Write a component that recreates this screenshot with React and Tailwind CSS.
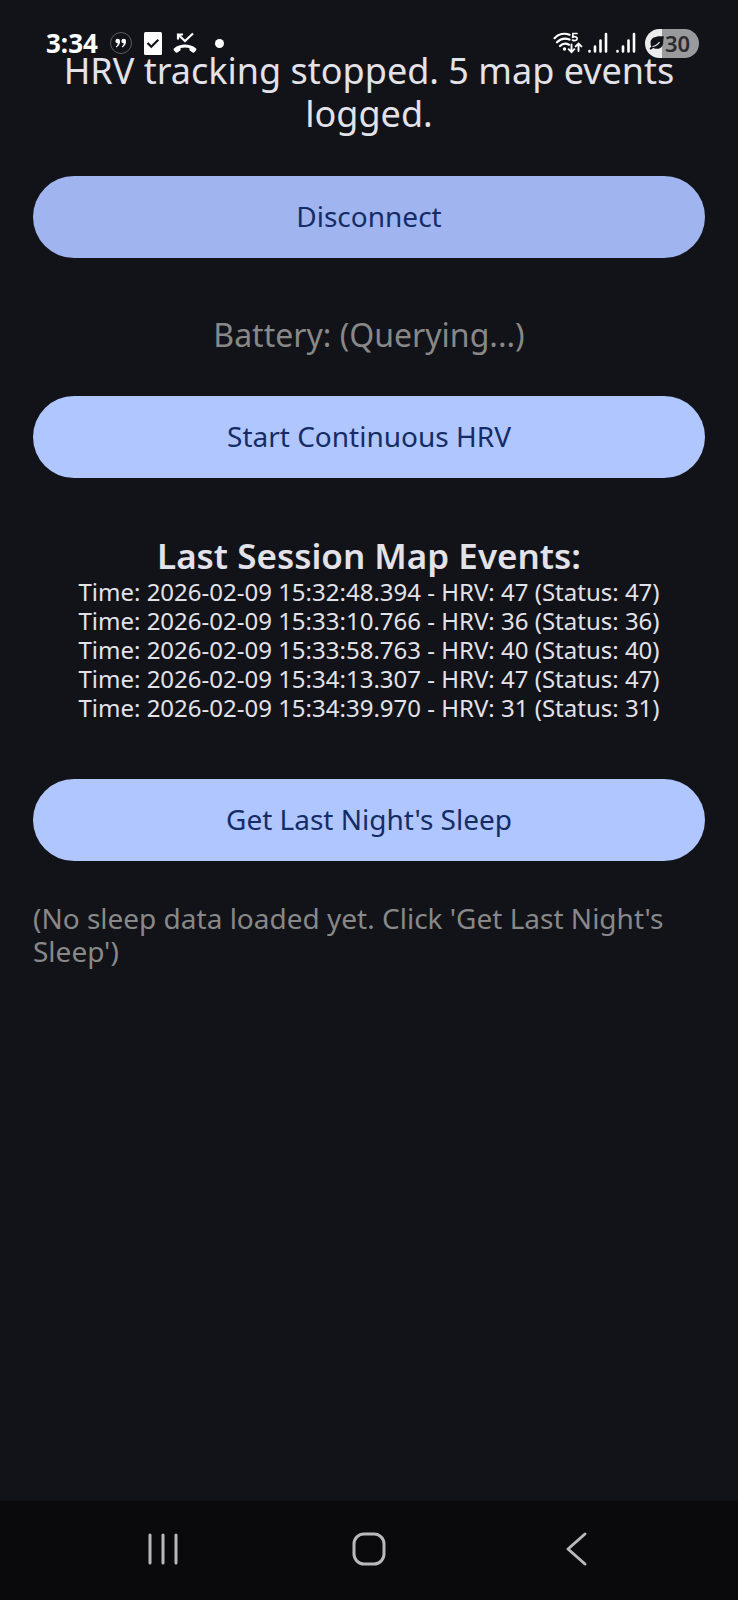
const events = [
  { time: "2026-02-09 15:32:48.394", hrv: 47, status: 47 },
  { time: "2026-02-09 15:33:10.766", hrv: 36, status: 36 },
  { time: "2026-02-09 15:33:58.763", hrv: 40, status: 40 },
  { time: "2026-02-09 15:34:13.307", hrv: 47, status: 47 },
  { time: "2026-02-09 15:34:39.970", hrv: 31, status: 31 },
];

function SignalIcon() {
  return (
    <svg width="20" height="22" viewBox="0 0 20 22" stroke="#fff" strokeWidth="2.6" strokeLinecap="round">
      <path d="M1.5 19v.5M7 14.5v5M12.5 8.5v11M18 2v17.5" />
    </svg>
  );
}

function WifiIcon() {
  return (
    <svg width="30" height="22" viewBox="0 0 30 22" fill="none" stroke="#fff" strokeWidth="2.2" strokeLinecap="round">
      <path d="M1.5 6.2C5.500 2 11.500 .8 16.500 2.800" />
      <path d="M4 10.300C7.500 6.700 12 5.800 16.500 7.500" />
      <path d="M7 14c2.500-2.600 5.800-3 9-1.300" />
      <circle cx="11.500" cy="17" r="1.700" fill="#fff" stroke="none" />
      <path d="M24 1.500h-4l-.3 3.600c2.800-1 4.600.1 4.400 1.800-.3 1.800-2.500 2.100-4.600 1.200" strokeWidth="1.700" />
      <path d="M18.500 12.500v7M15.600 17.200l2.900 2.900 2.900-2.900" strokeWidth="1.900" />
      <path d="M25.500 19v-7M22.600 14.400l2.900-2.900 2.900 2.900" strokeWidth="1.900" />
    </svg>
  );
}

function StatusBar() {
  return (
    <div className="absolute inset-x-0 top-0 z-10 flex h-[86px] items-center justify-between pl-[46px] pr-[39px]">
      <div className="flex items-center">
        <span className="text-[26px] font-bold leading-none text-white">3:34</span>
        <svg className="ml-[11px]" width="24" height="24" viewBox="0 0 24 24">
          <circle cx="12" cy="12" r="10.500" fill="none" stroke="#5b5c60" strokeWidth="1" />
          <g fill="#fff">
            <circle cx="8.700" cy="10" r="2.300" />
            <path d="M11 10c.2 3-1.200 5.200-3.600 6.400l-.6-1c1.300-.9 2-2 2-3.400z" />
            <circle cx="14.700" cy="10" r="2.300" />
            <path d="M17 10c.2 3-1.200 5.200-3.600 6.400l-.6-1c1.300-.9 2-2 2-3.400z" />
          </g>
        </svg>
        <svg className="ml-[11px]" width="18" height="23" viewBox="0 0 18 23">
          <rect width="18" height="23" rx="1.500" fill="#fff" />
          <path d="M3.500 11l3.800 3.800 7-7" fill="none" stroke="#121318" strokeWidth="2.200" />
        </svg>
        <svg className="ml-[11px]" width="24" height="22" viewBox="0 0 24 22">
          <path d="M5 7.500V2.500h5M5.500 3l6.500 6 8-7.500" fill="none" stroke="#fff" strokeWidth="2.200" />
          <path
            d="M1 18.500c-.6-.8-.5-1.700.2-2.300 6-5 15.600-5 21.600 0 .7.600.8 1.500.2 2.300l-1.600 1.800c-.5.600-1.200.6-1.800.2l-2.500-1.700c-.5-.3-.7-.8-.7-1.400v-1.300c-2.900-.8-5.900-.8-8.800 0v1.300c0 .6-.2 1.100-.7 1.400l-2.500 1.700c-.6.400-1.300.4-1.800-.2z"
            fill="#fff"
          />
        </svg>
        <span className="ml-[18px] size-[9px] rounded-full bg-white" />
      </div>
      <div className="flex items-center">
        <WifiIcon />
        <div className="ml-[5px] flex gap-2">
          <SignalIcon />
          <SignalIcon />
        </div>
        <div className="ml-[9px] flex h-[29px] w-[54px] items-center overflow-hidden rounded-full bg-[linear-gradient(to_right,#ececec_17px,#999a9c_17px)] pl-1">
          <svg width="16" height="16" viewBox="0 0 16 16">
            <path d="M15 1.500c-8-.8-13.500 1-13.500 6.500 0 1.500.3 2.700.9 3.500L.5 13.500l1.200 1.200 2.500-1.700c5 2.200 9.800 0 10-5.500 0-2 .1-4 .8-6z" fill="#121318" />
            <path d="M3.500 11.500c3-.5 5.500-2 7-4.500" fill="none" stroke="#ececec" strokeWidth="1.200" />
          </svg>
          <span className="text-[22px] font-semibold leading-none text-[#2a2b2e]">30</span>
        </div>
      </div>
    </div>
  );
}

function ActionButton({ children, pressed }) {
  return (
    <button
      className={`h-[82px] w-full rounded-full pb-0.5 text-[28px] leading-8 text-[#152c66] ${
        pressed ? "bg-[#a0b5ef]" : "bg-[#b0c6ff]"
      }`}
    >
      {children}
    </button>
  );
}

function NavBar() {
  return (
    <nav className="flex h-[99px] items-center justify-around bg-[#0a0a0c] px-[60px] pb-1">
      <button aria-label="Recent apps">
        <svg width="36" height="36" viewBox="0 0 36 36" stroke="#b9b9bb" strokeWidth="3" strokeLinecap="round">
          <path d="M5 4v28M18 4v28M31 4v28" />
        </svg>
      </button>
      <button aria-label="Home">
        <svg width="36" height="36" viewBox="0 0 36 36" fill="none" stroke="#b9b9bb" strokeWidth="3">
          <rect x="3" y="3" width="30" height="30" rx="10" />
        </svg>
      </button>
      <button aria-label="Back">
        <svg width="36" height="36" viewBox="0 0 36 36" fill="none" stroke="#b9b9bb" strokeWidth="3" strokeLinecap="round" strokeLinejoin="round">
          <path d="M28 3L11 18l17 15" />
        </svg>
      </button>
    </nav>
  );
}

export default function App() {
  return (
    <div className="relative flex min-h-screen flex-col bg-[#121318] font-['Noto_Sans',sans-serif] text-[#e3e2e9]">
      <StatusBar />
      <main className="flex flex-1 flex-col items-center px-[33px] pt-[49px]">
        <p className="text-center text-[36px] leading-[43px]">
          HRV tracking stopped. 5 map events logged.
        </p>
        <div className="mt-[41px] w-full">
          <ActionButton pressed>Disconnect</ActionButton>
        </div>
        <p className="mt-[57px] text-[32px] leading-[40px] text-[#888888]">Battery: (Querying...)</p>
        <div className="mt-[41px] w-full">
          <ActionButton>Start Continuous HRV</ActionButton>
        </div>
        <h2 className="mt-[56px] text-[35px] font-semibold leading-[43px]">Last Session Map Events:</h2>
        <ul className="text-center text-[24px] leading-[29px]">
          {events.map((event) => (
            <li key={event.time}>
              Time: {event.time} - HRV: {event.hrv} (Status: {event.status})
            </li>
          ))}
        </ul>
        <div className="mt-[57px] w-full">
          <ActionButton>Get Last Night's Sleep</ActionButton>
        </div>
        <p className="mt-[41px] w-full text-[28px] leading-[33px] text-[#888888]">
          (No sleep data loaded yet. Click 'Get Last Night's Sleep')
        </p>
      </main>
      <NavBar />
    </div>
  );
}
